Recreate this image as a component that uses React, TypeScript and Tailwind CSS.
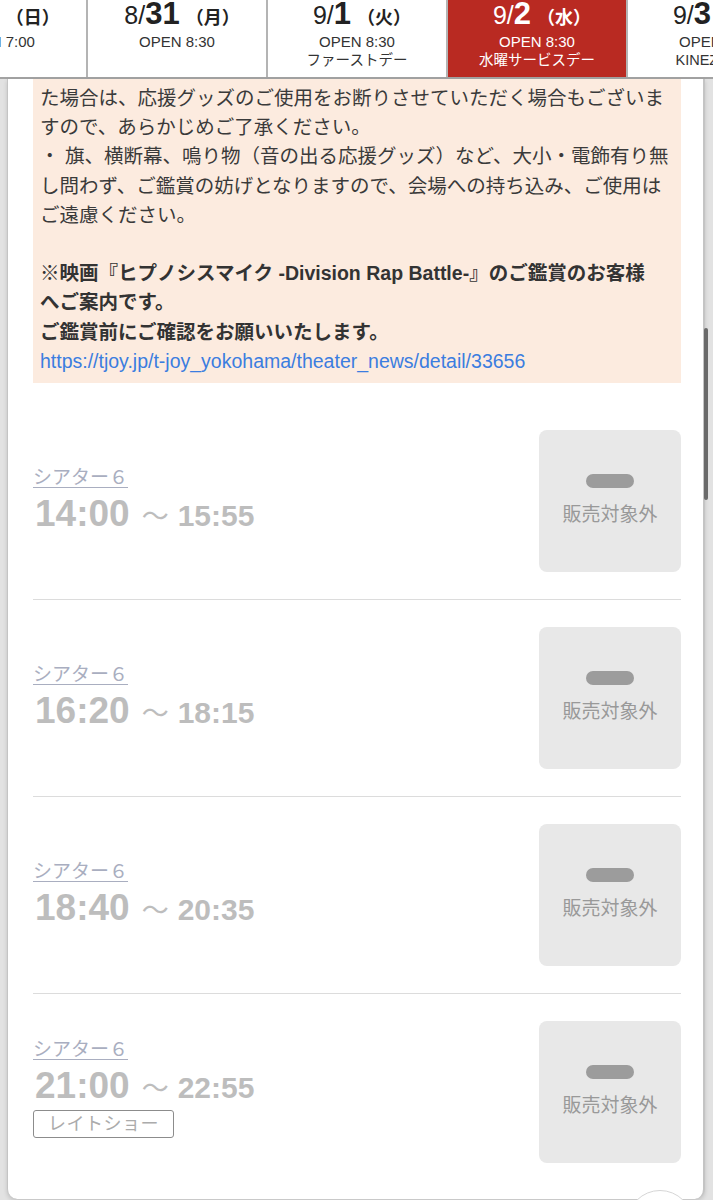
const font = "font-['Liberation_Sans','Noto_Sans_CJK_JP',sans-serif]";

type Tab = { m: string; d: string; w: string; open: string; sub?: string; active?: boolean };

const tabs: Tab[] = [
  { m: '8/', d: '30', w: '日', open: 'OPEN 7:00' },
  { m: '8/', d: '31', w: '月', open: 'OPEN 8:30' },
  { m: '9/', d: '1', w: '火', open: 'OPEN 8:30', sub: 'ファーストデー' },
  { m: '9/', d: '2', w: '水', open: 'OPEN 8:30', sub: '水曜サービスデー', active: true },
  { m: '9/', d: '3', w: '木', open: 'OPEN 8:30', sub: 'KINEZOの日' },
];

type Show = { start: string; end: string; tag?: string };

const shows: Show[] = [
  { start: '14:00', end: '15:55' },
  { start: '16:20', end: '18:15' },
  { start: '18:40', end: '20:35' },
  { start: '21:00', end: '22:55', tag: 'レイトショー' },
];

const DateTabs = () => (
  <div className="h-[79px] overflow-hidden border-b-2 border-[#a3a3a3] bg-white">
    <div className="flex -ml-[92px] h-full">
      {tabs.map((t) => (
        <div
          key={t.d}
          className={`flex h-full w-[180px] shrink-0 flex-col items-center border-r-2 border-[#b4b4b4] ${
            t.active ? 'bg-[#b92a22] text-white' : 'text-[#222]'
          }`}
        >
          <div className="flex h-[27px] items-baseline pt-[1px]">
            <span className="text-[25px] leading-[26px]">{t.m}</span>
            <span className="text-[31px] font-bold leading-[26px]">{t.d}</span>
            <span className="ml-[6px] -mr-[10px] text-[18px] font-bold leading-[26px]">（{t.w}）</span>
          </div>
          <div className={`mt-[6px] text-[15px] leading-[18px] ${t.active ? 'text-white' : 'text-[#333]'}`}>
            {t.open}
          </div>
          {t.sub && (
            <div className={`text-[14.5px] leading-[18px] ${t.active ? 'text-white' : 'text-[#333]'}`}>
              {t.sub}
            </div>
          )}
        </div>
      ))}
    </div>
  </div>
);

const Notice = () => (
  <div className="bg-[#fcebdf] pl-[7px] pt-[5px] pb-[7px] text-[19.5px] leading-[29.2px] text-[#3a3a3a] whitespace-nowrap">
    <div>た場合は、応援グッズのご使用をお断りさせていただく場合もございま</div>
    <div>すので、あらかじめご了承ください。</div>
    <div>・ 旗、横断幕、鳴り物（音の出る応援グッズ）など、大小・電飾有り無</div>
    <div>し問わず、ご鑑賞の妨げとなりますので、会場への持ち込み、ご使用は</div>
    <div>ご遠慮ください。</div>
    <div>&nbsp;</div>
    <div className="font-bold text-[#333]">※映画『ヒプノシスマイク -Division Rap Battle-』のご鑑賞のお客様</div>
    <div className="font-bold text-[#333]">へご案内です。</div>
    <div className="font-bold text-[#333]">ご鑑賞前にご確認をお願いいたします。</div>
    <a href="#" className="block text-[#3b7de0]">
      https://tjoy.jp/t-joy_yokohama/theater_news/detail/33656
    </a>
  </div>
);

const ShowRow = ({ show, last }: { show: Show; last: boolean }) => (
  <div className={`flex items-center justify-between py-[27px] ${last ? '' : 'border-b border-[#dcdcdc]'}`}>
    <div className="flex flex-col">
      <a href="#" className="self-start text-[19px] leading-[22px] text-[#a9aec0] underline decoration-[#a9aec0] underline-offset-[3px]">
        シアター６
      </a>
      <div className="mt-[7px] flex items-baseline text-[#bdbdbd] leading-[36px]">
        <span className="ml-[2px] text-[37px] font-bold">{show.start}</span>
        <span className="ml-[12px] text-[27px]">〜</span>
        <span className="ml-[9px] text-[30px] font-bold">{show.end}</span>
      </div>
      {show.tag && (
        <div className="mt-[3px] mb-[8px] self-start rounded-[3px] border-[1.5px] border-[#8c8c8c] px-[14px] text-[18px] leading-[26px] tracking-[0.5px] text-[#ababab]">
          {show.tag}
        </div>
      )}
    </div>
    <div className="flex h-[142px] w-[142px] flex-col items-center justify-center rounded-[8px] bg-[#e8e8e8]">
      <div className="h-[14px] w-[48px] rounded-full bg-[#9c9c9c]" />
      <div className="mt-[13px] text-[19px] leading-[28px] text-[#999]">販売対象外</div>
    </div>
  </div>
);

export default function App() {
  return (
    <div className={`relative h-[1200px] w-[713px] overflow-hidden bg-[#e2e2e2] ${font}`}>
      <DateTabs />
      <div className="mr-[8px] ml-[7px] rounded-b-[10px] border-l border-r-2 border-[#c4c4c4] bg-white pl-[25px] pr-[22px] pb-[9px] shadow-[0_2px_4px_rgba(0,0,0,0.15)]">
        <Notice />
        <div className="mt-[20px]">
          {shows.map((s, i) => (
            <ShowRow key={s.start} show={s} last={i === shows.length - 1} />
          ))}
        </div>
      </div>
      {/* scroll indicator */}
      <div className="absolute left-[704px] top-[328px] h-[172px] w-[4px] rounded-full bg-[#6a6a6a]" />
      {/* page top button peeking */}
      <div className="absolute left-[627px] top-[1190px] h-[66px] w-[66px] rounded-full border border-[#d6d6d6] bg-white" />
    </div>
  );
}
